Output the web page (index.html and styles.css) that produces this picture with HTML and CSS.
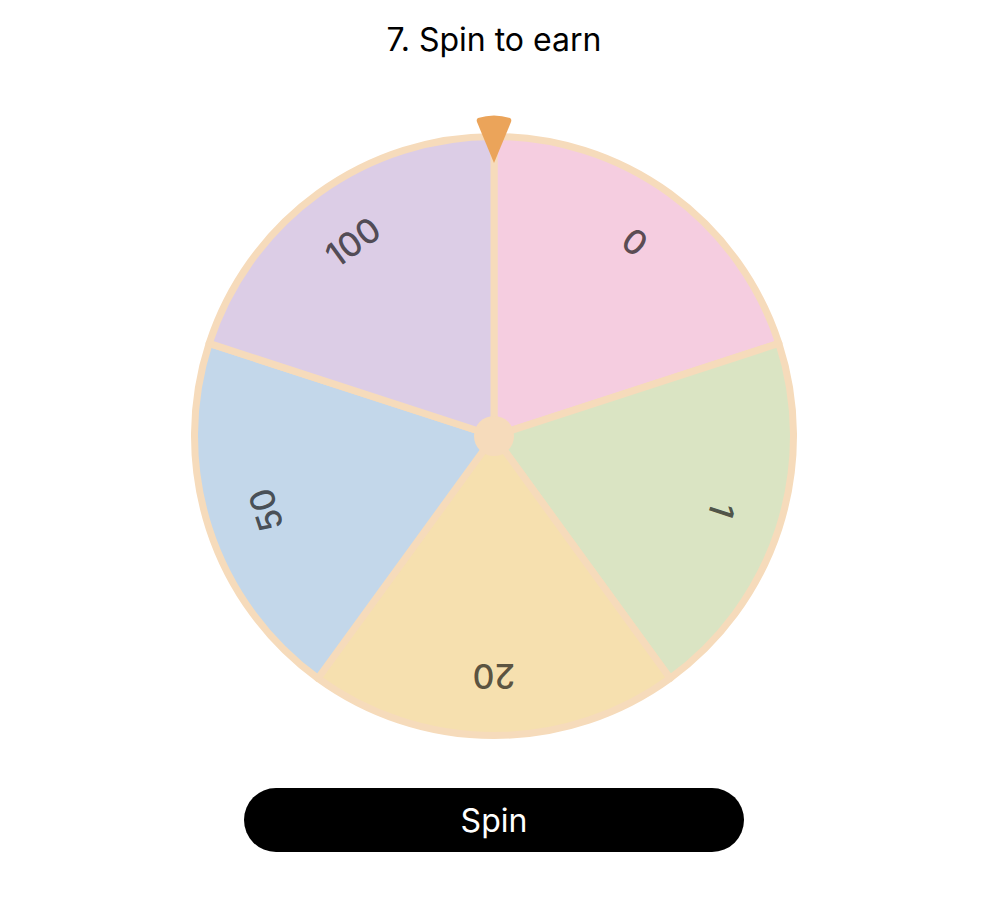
FILE: index.html
```html
<!DOCTYPE html>
<html lang="en">
<head>
    <meta charset="UTF-8">
    <meta name="viewport" content="width=device-width, initial-scale=1.0">
    <title>Spin to earn</title>
    <link rel="stylesheet" href="styles.css">
</head>
<body>

<div class="page">
    <h2 class="title">7. Spin to earn</h2>

    <div class="wheel">
        <svg class="wheel-svg" width="606" height="606" viewBox="-303 -303 606 606">
            <g stroke="#f6dbbb" stroke-width="7" stroke-linejoin="round">
                <path fill="#f5cde0" d="M0 0 L0 -299.5 A299.5 299.5 0 0 1 284.84 -92.55 Z"/>
                <path fill="#dae4c3" d="M0 0 L284.84 -92.55 A299.5 299.5 0 0 1 176.04 242.30 Z"/>
                <path fill="#f6e0af" d="M0 0 L176.04 242.30 A299.5 299.5 0 0 1 -176.04 242.30 Z"/>
                <path fill="#c3d7ea" d="M0 0 L-176.04 242.30 A299.5 299.5 0 0 1 -284.84 -92.55 Z"/>
                <path fill="#dccde6" d="M0 0 L-284.84 -92.55 A299.5 299.5 0 0 1 0 -299.5 Z"/>
            </g>
            <circle cx="0" cy="0" r="20" fill="#f6dbbb"/>
            <g class="labels">
                <text transform="rotate(36)" x="0" y="-240">0</text>
                <text transform="rotate(108)" x="0" y="-240">1</text>
                <text transform="rotate(180)" x="0" y="-240">20</text>
                <text transform="rotate(252)" x="0" y="-240">50</text>
                <text transform="rotate(324)" x="0" y="-240">100</text>
            </g>
        </svg>
        <svg class="pointer" width="38" height="50" viewBox="0 0 38 50">
            <path fill="#eba45a" d="M3 4 Q19 -1 35 4 Q37 5 36 8 L19 49 L2 8 Q1 5 3 4 Z"/>
        </svg>
    </div>

    <button class="spin-btn">Spin</button>
</div>

</body>
</html>
```

FILE: styles.css
```css
body {
    font-family: Inter, "Noto Sans", sans-serif;
    margin: 0;
    padding: 0;
    background-color: #fff;
    color: #000;
}
.page {
    display: flex;
    flex-direction: column;
    align-items: center;
    padding-top: 21px;
    padding-right: 8px;
}
.title {
    margin: 0;
    font-size: 32px;
    font-weight: 400;
    line-height: 38px;
}
.wheel {
    position: relative;
    width: 606px;
    height: 606px;
    margin-top: 74px;
}
.wheel-svg {
    display: block;
}
.labels text {
    font-family: Inter, sans-serif;
    font-size: 34px;
    font-weight: 500;
    fill: rgba(0, 0, 0, 0.65);
    text-anchor: middle;
    dominant-baseline: central;
}
/* pointer sits over the top edge of the wheel */
.pointer {
    position: absolute;
    top: -19px;
    left: 284px;
}
.spin-btn {
    margin-top: 49px;
    width: 500px;
    height: 64px;
    border: none;
    border-radius: 32px;
    background-color: #000;
    color: #fff;
    font-family: Inter, sans-serif;
    font-size: 32px;
    cursor: pointer;
}
```
